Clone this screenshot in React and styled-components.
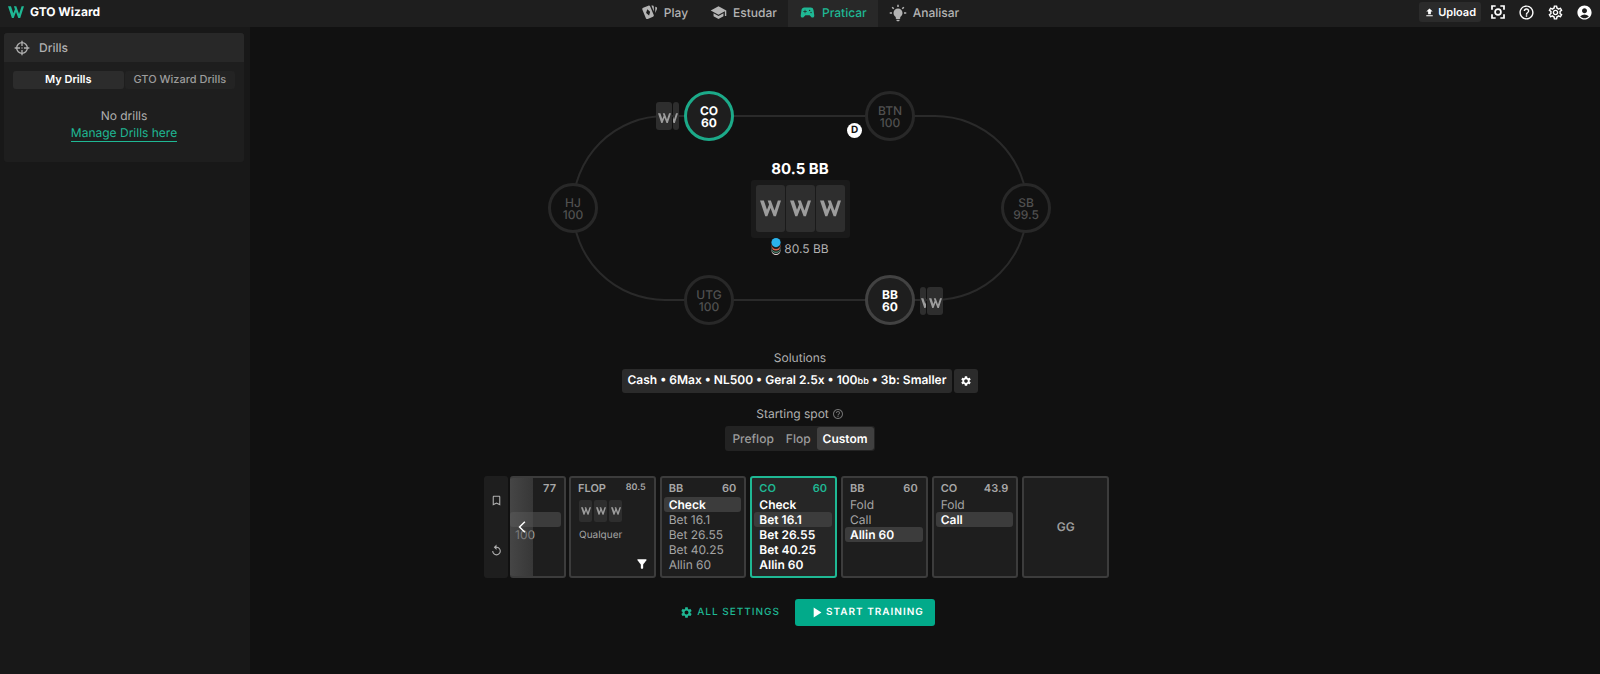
import React from "react";
import styled, { createGlobalStyle, css } from "styled-components";
import {
  MdSchool,
  MdSportsEsports,
  MdUpload,
  MdHelpOutline,
  MdOutlineSettings,
  MdSettings,
  MdAccountCircle,
  MdBookmarkBorder,
  MdReplay,
  MdPlayArrow,
  MdFilterAlt,
  MdArrowBackIosNew,
} from "react-icons/md";

const teal = "#1fb894";

const GlobalStyle = createGlobalStyle`
  * { box-sizing: border-box; }
  body {
    margin: 0;
    background: #111111;
    color: #b0b0b0;
    font-family: Inter, "Liberation Sans", sans-serif;
    font-size: 12px;
    line-height: 16px;
    text-rendering: geometricPrecision;
  }
  button {
    font: inherit;
    color: inherit;
    text-rendering: inherit;
    background: none;
    border: 0;
    padding: 0;
    margin: 0;
    cursor: pointer;
  }
  a { color: inherit; text-decoration: none; }
  svg { display: block; flex: none; }
`;

/* ---------- Icons ---------- */

const LogoMark = ({ width = 16, color = "currentColor" }) => (
  <svg width={width} viewBox="0 0 24 19" fill={color} aria-hidden="true">
    <path d="M0 0.5 L4.4 0.5 L8 11 L10.4 5 L8.8 0.5 L12.4 0.5 L16.6 12 L20.4 0.5 L24 0.5 L18.2 18.5 L15.6 18.5 L12 9 L8.4 18.5 L6 18.5 Z" />
  </svg>
);

const CardsIcon = () => (
  <svg width="17" height="17" viewBox="0 0 24 24" fill="currentColor" fillRule="evenodd" aria-hidden="true">
    <path d="M11.19,2.25C10.93,2.25 10.67,2.31 10.42,2.4L3.06,5.45C2.04,5.87 1.55,7.04 1.97,8.05L6.93,20C7.24,20.77 7.97,21.23 8.74,21.25C9,21.25 9.27,21.22 9.53,21.1L16.9,18.05C17.65,17.74 18.11,17 18.13,16.25C18.14,16 18.09,15.71 18,15.45L13,3.5C12.71,2.73 11.97,2.26 11.19,2.25M8.8,7.4L12.9,10.9L11.4,16.2L7.2,12.7Z" />
    <path d="M14.67,2.25L18.12,10.6V4.25A2,2 0 0,0 16.12,2.25M20.13,3.79V12.82L22.56,6.96C22.97,5.94 22.5,4.78 21.47,4.36" />
  </svg>
);

const BulbIcon = () => (
  <svg width="18" height="18" viewBox="0 0 24 24" fill="currentColor" aria-hidden="true">
    <path d="M12,6A6,6 0 0,1 18,12C18,14.22 16.79,16.16 15,17.2V19A1,1 0 0,1 14,20H10A1,1 0 0,1 9,19V17.2C7.21,16.16 6,14.22 6,12A6,6 0 0,1 12,6M14,21V22A1,1 0 0,1 13,23H11A1,1 0 0,1 10,22V21H14M20,11H23V13H20V11M1,11H4V13H1V11M13,1V4H11V1H13M4.92,3.5L7.05,5.64L5.63,7.05L3.5,4.93L4.92,3.5M16.95,5.63L19.07,3.5L20.5,4.93L18.37,7.05L16.95,5.63Z" />
  </svg>
);

const CrosshairIcon = () => (
  <svg width="16" height="16" viewBox="0 0 24 24" fill="none" stroke="currentColor" strokeWidth="2" aria-hidden="true">
    <circle cx="12" cy="12" r="8" />
    <path d="M12 1V9M12 15V23M1 12H9M15 12H23" />
    <circle cx="12" cy="12" r="1" fill="currentColor" stroke="none" />
  </svg>
);

const FocusIcon = () => (
  <svg width="16" height="16" viewBox="0 0 24 24" fill="none" stroke="currentColor" strokeWidth="2.6" aria-hidden="true">
    <path d="M3 8.5V3H8.5M15.5 3H21V8.5M21 15.5V21H15.5M8.5 21H3V15.5" />
    <circle cx="12" cy="12" r="4.4" />
  </svg>
);

const ChipStack = () => (
  <svg width="10" height="18" viewBox="0 0 10 18" aria-hidden="true">
    <circle cx="5" cy="12.6" r="4.5" fill="#e8d5d5" />
    <circle cx="5" cy="11.5" r="4.5" fill="#1c1c1c" />
    <circle cx="5" cy="10.5" r="4.5" fill="#4f8a72" />
    <circle cx="5" cy="9.3" r="4.5" fill="#1c1c1c" />
    <circle cx="5" cy="8" r="4.5" fill="#d9634a" />
    <circle cx="5" cy="6.6" r="4.5" fill="#1c1c1c" />
    <circle cx="5" cy="4.6" r="4.6" fill="#2bb3ec" />
  </svg>
);

/* ---------- Top bar ---------- */

const Page = styled.div`
  min-height: 100vh;
  display: flex;
  flex-direction: column;
`;

const TopBar = styled.header`
  display: grid;
  grid-template-columns: 1fr auto 1fr;
  height: 27px;
  background: #1e1e1e;
`;

const Brand = styled.a`
  display: flex;
  align-items: center;
  gap: 6px;
  padding: 0 0 3px 8px;
  color: #ffffff;
  font-weight: 700;
`;

const Nav = styled.nav`
  display: flex;
`;

const NavLink = styled.a`
  display: flex;
  align-items: center;
  gap: 6px;
  padding: 0 11px 2px;
  font-weight: 500;
  color: ${(p) => (p.$active ? teal : "#b4b4b4")};
  background: ${(p) => (p.$active ? "#282828" : "transparent")};
`;

const Tools = styled.div`
  display: flex;
  justify-content: flex-end;
  align-items: center;
  gap: 12px;
  padding: 0 7px 3px 0;
  color: #ffffff;
`;

const UploadButton = styled.button`
  display: flex;
  align-items: center;
  gap: 3px;
  height: 20px;
  padding: 0 5px;
  margin-right: -3px;
  border-radius: 3px;
  background: #2b2b2b;
  font-size: 11px;
  font-weight: 600;
`;

/* ---------- Sidebar ---------- */

const Body = styled.div`
  flex: 1;
  display: grid;
  grid-template-columns: 250px minmax(0, 1fr) 250px;
`;

const Sidebar = styled.aside`
  background: #181818;
  padding: 6px 6px 0 4px;
`;

const Panel = styled.section`
  background: #1e1e1e;
  border-radius: 3px;
  overflow: hidden;
  padding-bottom: 20px;
`;

const PanelTitle = styled.h2`
  display: flex;
  align-items: center;
  gap: 9px;
  height: 29px;
  margin: 0;
  padding-left: 10px;
  background: #282828;
  font-size: 12px;
  font-weight: 500;
`;

const Tabs = styled.div`
  display: grid;
  grid-template-columns: 1fr 1fr;
  gap: 1px;
  padding: 9px 9px 0;
`;

const Tab = styled.button`
  height: 18px;
  padding-bottom: 2px;
  border-radius: 3px;
  font-size: 11px;
  font-weight: ${(p) => (p.$active ? 600 : 500)};
  color: ${(p) => (p.$active ? "#ffffff" : "#9c9c9c")};
  background: ${(p) => (p.$active ? "#2c2c2c" : "#232323")};
`;

const Empty = styled.div`
  display: flex;
  flex-direction: column;
  align-items: center;
  padding-top: 18px;
  line-height: 18px;
`;

const ManageLink = styled.a`
  color: ${teal};
  line-height: 16px;
  border-bottom: 1px solid ${teal};
`;

/* ---------- Poker table ---------- */

const Main = styled.main`
  display: flex;
  flex-direction: column;
  align-items: center;
  padding: 64px 0 48px;
`;

const Table = styled.div`
  position: relative;
  width: 504px;
  height: 234px;
  padding: 24px;
`;

const Felt = styled.div`
  height: 186px;
  border: 2px solid #2a2a2a;
  border-radius: 93px;
  display: flex;
  flex-direction: column;
  align-items: center;
  padding-top: 42px;
`;

const seatTones = {
  folded: css`
    color: #505050;
    background: #111111;
    border-color: #282828;
  `,
  waiting: css`
    color: #ffffff;
    background: #1e1e1e;
    border-color: #424242;
    font-weight: 700;
  `,
  acting: css`
    color: #ffffff;
    background: #1e1e1e;
    border-color: #1caa89;
    font-weight: 700;
  `,
};

const SeatCircle = styled.div`
  position: absolute;
  left: ${(p) => p.$x}px;
  top: ${(p) => p.$y}px;
  width: 50px;
  height: 50px;
  display: flex;
  flex-direction: column;
  align-items: center;
  justify-content: center;
  padding-top: 1px;
  border: 3px solid;
  border-radius: 50%;
  font-weight: 500;
  line-height: 12px;
  ${(p) => seatTones[p.$tone]}
`;

const Hand = styled.div`
  position: absolute;
  left: ${(p) => p.$x}px;
  top: ${(p) => p.$y}px;
  display: flex;
  gap: 1px;
`;

const HoleCard = styled.div`
  width: ${(p) => (p.$sliver ? 6 : 16)}px;
  height: 28px;
  display: flex;
  align-items: center;
  justify-content: ${(p) => p.$align || "center"};
  padding: 4px 1px 0;
  overflow: hidden;
  border-radius: 3px;
  background: #2e2e2e;
  color: #9c9c9c;
`;

const DealerButton = styled.div`
  position: absolute;
  left: 299px;
  top: 32px;
  width: 15px;
  height: 15px;
  border-radius: 50%;
  background: #ffffff;
  color: #111111;
  font-size: 10px;
  font-weight: 700;
  line-height: 15px;
  text-align: center;
`;

const Pot = styled.div`
  color: #ffffff;
  font-size: 15px;
  font-weight: 700;
  line-height: 20px;
`;

const Board = styled.div`
  display: flex;
  gap: 1px;
  margin-top: 1px;
  padding: 5px 5px 6px;
  border-radius: 3px;
  background: #1a1a1a;
`;

const BoardCard = styled.div`
  width: 29px;
  height: 47px;
  display: grid;
  place-items: center;
  border-radius: 3px;
  background: #2e2e2e;
  color: #9c9c9c;
`;

const PotChips = styled.div`
  display: flex;
  align-items: flex-start;
  gap: 3px;
  line-height: 22px;
`;

/* ---------- Setup ---------- */

const SectionLabel = styled.div`
  display: flex;
  align-items: center;
  gap: 3px;
  line-height: 16px;
  margin-top: ${(p) => (p.$first ? 25 : 13)}px;
`;

const SolutionRow = styled.div`
  display: flex;
  gap: 2px;
  margin-top: 3px;
`;

const SolutionButton = styled.button`
  height: 24px;
  min-width: 24px;
  padding: 0 6px 1px;
  border-radius: 3px;
  background: #2b2b2b;
  color: #ffffff;
  font-weight: 600;
  small { font-size: 9px; }
`;

const Segments = styled.div`
  display: flex;
  margin-top: 4px;
  padding: 1px;
  border-radius: 3px;
  background: #232323;
`;

const Segment = styled.button`
  height: 23px;
  padding: 0 6px;
  border-radius: 3px;
  font-weight: ${(p) => (p.$active ? 600 : 500)};
  color: ${(p) => (p.$active ? "#ffffff" : "#9c9c9c")};
  background: ${(p) => (p.$active ? "#404040" : "transparent")};
`;

/* ---------- Action line ---------- */

const Timeline = styled.div`
  display: flex;
  width: 625px;
  max-width: 100%;
  height: 102px;
  margin: 25px 7px 0 0;
`;

const Side = styled.div`
  flex: none;
  width: 24px;
  margin-right: 2px;
  padding-bottom: 3px;
  display: flex;
  flex-direction: column;
  align-items: center;
  justify-content: space-around;
  border-radius: 3px;
  background: #1e1e1e;
`;

const ClippedSpot = styled.div`
  position: relative;
  flex: none;
  width: 56px;
  margin-right: 3px;
  padding: 1px 3px 4px 0;
  display: flex;
  flex-direction: column;
  overflow: hidden;
  border: 2px solid #3c3c3c;
  border-left: 0;
  border-radius: 3px;
  background: #1e1e1e;
`;

const ScrollBack = styled.button`
  position: absolute;
  inset: 0 auto 0 0;
  width: 23px;
  display: grid;
  place-items: center;
  color: #ffffff;
  background: linear-gradient(90deg, #60606099, #50505080);
`;

const Spots = styled.div`
  flex: 1;
  display: grid;
  grid-template-columns: repeat(6, 1fr);
  gap: 4px;
`;

const Spot = styled.section`
  display: flex;
  flex-direction: column;
  padding: 1px 3px 4px 2px;
  border: 2px solid ${(p) => (p.$active ? teal : "#3c3c3c")};
  border-radius: 3px;
  background: ${(p) => (p.$active ? "#262626" : "#1e1e1e")};
`;

const SpotHead = styled.div`
  display: flex;
  justify-content: space-between;
  padding: 0 5px;
  font-size: 11px;
  font-weight: 600;
  line-height: 18px;
  color: ${(p) => (p.$active ? teal : "#a8a8a8")};
  small { font-size: 9px; }
`;

const Actions = styled.div`
  flex: 1;
  display: grid;
  grid-template-rows: repeat(5, 1fr);
`;

const Action = styled.button`
  display: flex;
  align-items: center;
  padding: 0 5px;
  border-radius: 3px;
  text-align: left;
  line-height: 14px;
  white-space: nowrap;
  font-weight: ${(p) => (p.$bright ? 600 : 400)};
  color: ${(p) => (p.$bright ? "#ffffff" : "#a4a4a4")};
  background: ${(p) => (p.$chosen ? "#3c3c3c" : "transparent")};
`;

const FlopCards = styled.div`
  display: flex;
  gap: 2px;
  padding: 3px 6px 0;
`;

const MiniCard = styled.div`
  width: 13px;
  height: 22px;
  display: grid;
  place-items: center;
  border-radius: 2px;
  background: #2e2e2e;
  color: #9c9c9c;
`;

const FlopName = styled.div`
  padding: 5px 6px 0;
  font-size: 10px;
  color: #a4a4a4;
`;

const FilterButton = styled.button`
  align-self: flex-end;
  margin: auto 2px 1px;
  color: #ffffff;
`;

const EndSpot = styled(Spot)`
  align-items: center;
  justify-content: center;
  padding: 0;
  font-weight: 600;
  color: #9c9c9c;
`;

const Footer = styled.div`
  display: flex;
  align-items: center;
  margin-top: 21px;
`;

const FooterButton = styled.button`
  display: flex;
  align-items: center;
  height: 27px;
  border-radius: 3px;
  font-size: 10px;
  letter-spacing: 1px;
  ${(p) =>
    p.$primary
      ? css`
          gap: 1px;
          padding: 0 11px 1px 13px;
          background: #02aa8a;
          color: #ffffff;
          font-weight: 600;
        `
      : css`
          gap: 4px;
          padding: 0 15px 1px;
          color: ${teal};
          font-weight: 500;
        `}
`;

const seats = [
  { name: "CO", stack: "60", x: 136, y: 0, tone: "acting" },
  { name: "BTN", stack: "100", x: 317, y: 0, tone: "folded" },
  { name: "SB", stack: "99.5", x: 453, y: 92, tone: "folded" },
  { name: "BB", stack: "60", x: 317, y: 184, tone: "waiting" },
  { name: "UTG", stack: "100", x: 136, y: 184, tone: "folded" },
  { name: "HJ", stack: "100", x: 0, y: 92, tone: "folded" },
];

const bets = ["Check", "Bet 16.1", "Bet 26.55", "Bet 40.25", "Allin 60"];

const spots = [
  { name: "BB", stack: "60", actions: bets, chosen: "Check" },
  { name: "CO", stack: "60", actions: bets, chosen: "Bet 16.1", active: true },
  { name: "BB", stack: "60", actions: ["Fold", "Call", "Allin 60"], chosen: "Allin 60" },
  { name: "CO", stack: "43.9", actions: ["Fold", "Call"], chosen: "Call" },
];

export default function App() {
  return (
    <Page>
      <GlobalStyle />
      <TopBar>
        <Brand href="#">
          <LogoMark width={16} color={teal} />
          GTO Wizard
        </Brand>
        <Nav>
          <NavLink href="#"><CardsIcon />Play</NavLink>
          <NavLink href="#"><MdSchool size={17} />Estudar</NavLink>
          <NavLink href="#" $active><MdSportsEsports size={17} />Praticar</NavLink>
          <NavLink href="#"><BulbIcon />Analisar</NavLink>
        </Nav>
        <Tools>
          <UploadButton><MdUpload size={11} />Upload</UploadButton>
          <button aria-label="Focus mode"><FocusIcon /></button>
          <button aria-label="Help"><MdHelpOutline size={17} /></button>
          <button aria-label="Settings"><MdOutlineSettings size={17} /></button>
          <button aria-label="Account"><MdAccountCircle size={17} /></button>
        </Tools>
      </TopBar>

      <Body>
        <Sidebar>
          <Panel>
            <PanelTitle><CrosshairIcon />Drills</PanelTitle>
            <Tabs>
              <Tab $active>My Drills</Tab>
              <Tab>GTO Wizard Drills</Tab>
            </Tabs>
            <Empty>
              No drills
              <ManageLink href="#">Manage Drills here</ManageLink>
            </Empty>
          </Panel>
        </Sidebar>

        <Main>
          <Table>
            <Felt>
              <Pot>80.5 BB</Pot>
              <Board>
                {[0, 1, 2].map((i) => (
                  <BoardCard key={i}><LogoMark width={21} /></BoardCard>
                ))}
              </Board>
              <PotChips><ChipStack />80.5 BB</PotChips>
            </Felt>
            {seats.map((s) => (
              <SeatCircle key={s.name} $x={s.x} $y={s.y} $tone={s.tone}>
                <span>{s.name}</span>
                <span>{s.stack}</span>
              </SeatCircle>
            ))}
            <Hand $x={108} $y={11}>
              <HoleCard><LogoMark width={13} /></HoleCard>
              <HoleCard $sliver $align="flex-end"><LogoMark width={13} /></HoleCard>
            </Hand>
            <Hand $x={372} $y={196}>
              <HoleCard $sliver $align="flex-start"><LogoMark width={13} /></HoleCard>
              <HoleCard><LogoMark width={13} /></HoleCard>
            </Hand>
            <DealerButton>D</DealerButton>
          </Table>

          <SectionLabel $first>Solutions</SectionLabel>
          <SolutionRow>
            <SolutionButton>
              Cash • 6Max • NL500 • Geral 2.5x • 100<small>bb</small> • 3b: Smaller
            </SolutionButton>
            <SolutionButton aria-label="Solution settings"><MdSettings size={12} /></SolutionButton>
          </SolutionRow>

          <SectionLabel>Starting spot <MdHelpOutline size={12} color="#707070" /></SectionLabel>
          <Segments>
            <Segment>Preflop</Segment>
            <Segment>Flop</Segment>
            <Segment $active>Custom</Segment>
          </Segments>

          <Timeline>
            <Side>
              <button aria-label="Bookmark"><MdBookmarkBorder size={13} /></button>
              <button aria-label="Reset"><MdReplay size={13} /></button>
            </Side>
            <ClippedSpot>
              <SpotHead><span /><span>77</span></SpotHead>
              <Actions>
                <Action as="div" />
                <Action as="div" $chosen />
                <Action as="div">100</Action>
              </Actions>
              <ScrollBack aria-label="Scroll back"><MdArrowBackIosNew size={14} /></ScrollBack>
            </ClippedSpot>
            <Spots>
              <Spot>
                <SpotHead><span>FLOP</span><small>80.5</small></SpotHead>
                <FlopCards>
                  {[0, 1, 2].map((i) => (
                    <MiniCard key={i}><LogoMark width={10} /></MiniCard>
                  ))}
                </FlopCards>
                <FlopName>Qualquer</FlopName>
                <FilterButton aria-label="Filter flop"><MdFilterAlt size={14} /></FilterButton>
              </Spot>
              {spots.map((s, i) => (
                <Spot key={i} $active={s.active}>
                  <SpotHead $active={s.active}>
                    <span>{s.name}</span>
                    <span>{s.stack}</span>
                  </SpotHead>
                  <Actions>
                    {s.actions.map((a) => (
                      <Action key={a} $chosen={a === s.chosen} $bright={s.active || a === s.chosen}>
                        {a}
                      </Action>
                    ))}
                  </Actions>
                </Spot>
              ))}
              <EndSpot>GG</EndSpot>
            </Spots>
          </Timeline>

          <Footer>
            <FooterButton><MdSettings size={13} />ALL SETTINGS</FooterButton>
            <FooterButton $primary><MdPlayArrow size={17} />START TRAINING</FooterButton>
          </Footer>
        </Main>
      </Body>
    </Page>
  );
}
